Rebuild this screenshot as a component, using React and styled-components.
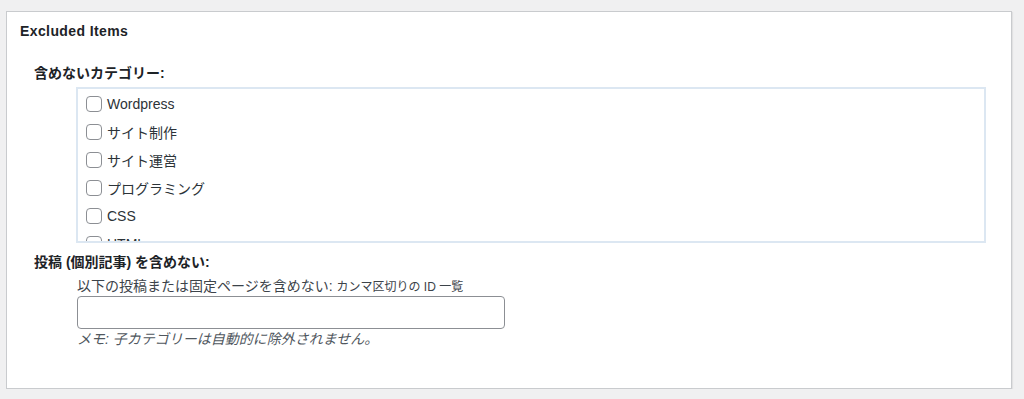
import React from "react";
import styled, { createGlobalStyle } from "styled-components";

const GlobalStyle = createGlobalStyle`
  html, body {
    margin: 0;
    padding: 0;
    background: #f0f0f1;
  }
  body {
    font-family: "Liberation Sans", "Noto Sans CJK JP", sans-serif;
    color: #1d2327;
  }
`;

const categories = [
  "Wordpress",
  "サイト制作",
  "サイト運営",
  "プログラミング",
  "CSS",
  "HTML",
];

const App = () => {
  return (
    <>
      <GlobalStyle />
      <Panel>
        <Title>Excluded Items</Title>

        <FieldLabel $top={22}>含めないカテゴリー:</FieldLabel>
        <CheckList>
          {categories.map((name) => (
            <CheckRow key={name}>
              <Checkbox type="checkbox" />
              <span>{name}</span>
            </CheckRow>
          ))}
        </CheckList>

        <FieldLabel $top={9}>投稿 (個別記事) を含めない:</FieldLabel>
        <Field>
          <Description>
            以下の投稿または固定ページを含めない: <Small>カンマ区切りの ID 一覧</Small>
          </Description>
          <TextInput type="text" />
          <Note>メモ: 子カテゴリーは自動的に除外されません。</Note>
        </Field>
      </Panel>
    </>
  );
};

export default App;

const Panel = styled.div`
  box-sizing: border-box;
  margin: 11px 12px 0 6px;
  height: 378px;
  padding: 9px 13px;
  background: #fff;
  border: 1px solid #c9cbce;
  box-shadow: 1px 1px 1px rgba(0, 0, 0, 0.06);
`;

const Title = styled.h2`
  margin: 0;
  font-size: 14px;
  font-weight: bold;
  line-height: 20px;
  letter-spacing: 0.4px;
  color: #1d2327;
`;

const FieldLabel = styled.div`
  margin: ${(p) => p.$top}px 0 0 14px;
  font-size: 14px;
  font-weight: bold;
  line-height: 20px;
  color: #1d2327;
`;

const CheckList = styled.ul`
  box-sizing: border-box;
  list-style: none;
  margin: 4px 12px 0 56px;
  padding: 1px 8px 0;
  height: 156px;
  overflow: hidden;
  border: 2px solid #dce7f2;
`;

const CheckRow = styled.li`
  display: flex;
  align-items: center;
  gap: 5px;
  height: 28px;
  font-size: 14px;
  color: #2c3338;
`;

const Checkbox = styled.input`
  appearance: none;
  box-sizing: border-box;
  flex: none;
  width: 16px;
  height: 16px;
  margin: 0;
  border: 1px solid #8c8f94;
  border-radius: 4px;
  background: #fff;
`;

const Field = styled.div`
  display: flex;
  flex-direction: column;
  align-items: flex-start;
  margin: 5px 0 0 57px;
`;

const Description = styled.div`
  font-size: 14px;
  line-height: 18px;
  color: #3c434a;
`;

const Small = styled.span`
  font-size: 12px;
`;

const TextInput = styled.input`
  box-sizing: border-box;
  width: 428px;
  height: 33px;
  margin: 0;
  padding: 0 8px;
  border: 1px solid #8c8f94;
  border-radius: 4px;
  background: #fff;
  font: inherit;
`;

const Note = styled.div`
  margin-top: 1px;
  font-size: 14px;
  line-height: 18px;
  font-style: italic;
  color: #50575e;
`;
